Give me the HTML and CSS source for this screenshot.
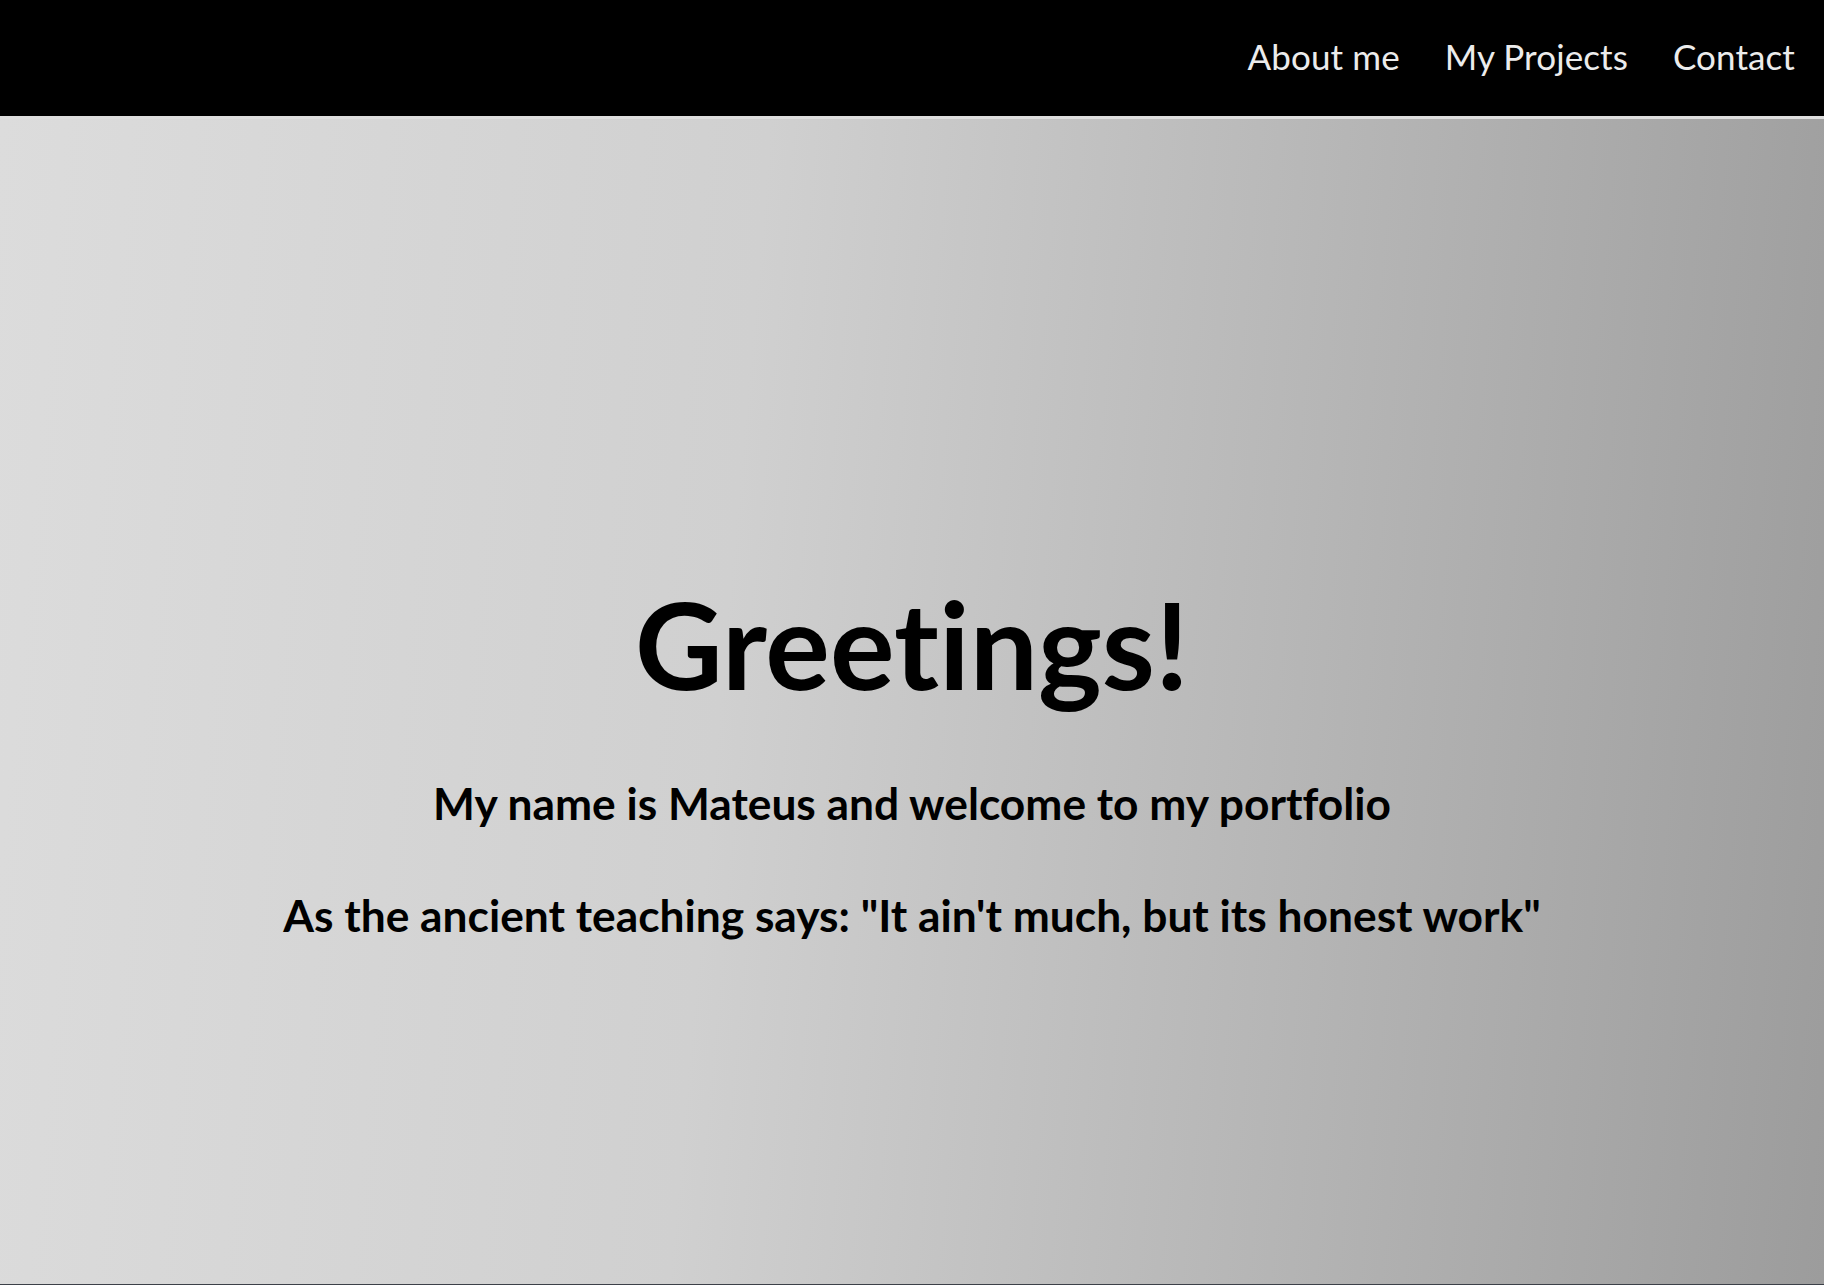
FILE: index.html
```html
<!DOCTYPE html>
<html lang="en">
<head>
<meta charset="utf-8">
<title>Mateus - Portfolio</title>
<link rel="stylesheet" href="styles.css">
</head>
<body>
<header class="topbar">
  <nav class="nav">
    <a class="nav-link" href="#about">About me</a>
    <a class="nav-link" href="#projects">My Projects</a>
    <a class="nav-link" href="#contact">Contact</a>
  </nav>
</header>
<main class="hero">
  <h1 class="hero-title">Greetings!</h1>
  <p class="hero-text">My name is Mateus and welcome to my portfolio</p>
  <p class="hero-text">As the ancient teaching says: "It ain't much, but its honest work"</p>
</main>
</body>
</html>
```
FILE: styles.css
```css
html, body {
  margin: 0;
  padding: 0;
  height: 100%;
}
body {
  font-family: "Trebuchet MS", "Lato", "Open Sans", sans-serif;
  font-variant-ligatures: none;
  background: #3c4048;
  display: flex;
  flex-direction: column;
}
.topbar {
  background: #000;
  height: 116px;
  border-bottom: 3px solid #dedede;
  display: flex;
  justify-content: flex-end;
  align-items: center;
  flex-shrink: 0;
}
.nav {
  display: flex;
  gap: 45px;
  padding-right: 29px;
  padding-bottom: 4px;
}
.nav-link {
  color: #ececec;
  text-decoration: none;
  font-size: 35px;
  letter-spacing: 0.1px;
}
.hero {
  flex: 1;
  margin-bottom: 1px;
  background: linear-gradient(95deg, #dcdcdc 0%, #d0d0d0 40%, #b6b6b6 70%, #9c9c9c 100%);
  display: flex;
  flex-direction: column;
  align-items: center;
  padding-top: 452px;
  box-sizing: border-box;
}
.hero-title {
  margin: 0;
  font-size: 121px;
  font-weight: 700;
  line-height: 1.2;
  color: #000;
}
.hero-text {
  margin: 60px 0 0;
  font-size: 44.3px;
  font-weight: 700;
  color: #000;
  line-height: 1.2;
}
.hero-text + .hero-text {
  margin-top: 59px;
}
```
